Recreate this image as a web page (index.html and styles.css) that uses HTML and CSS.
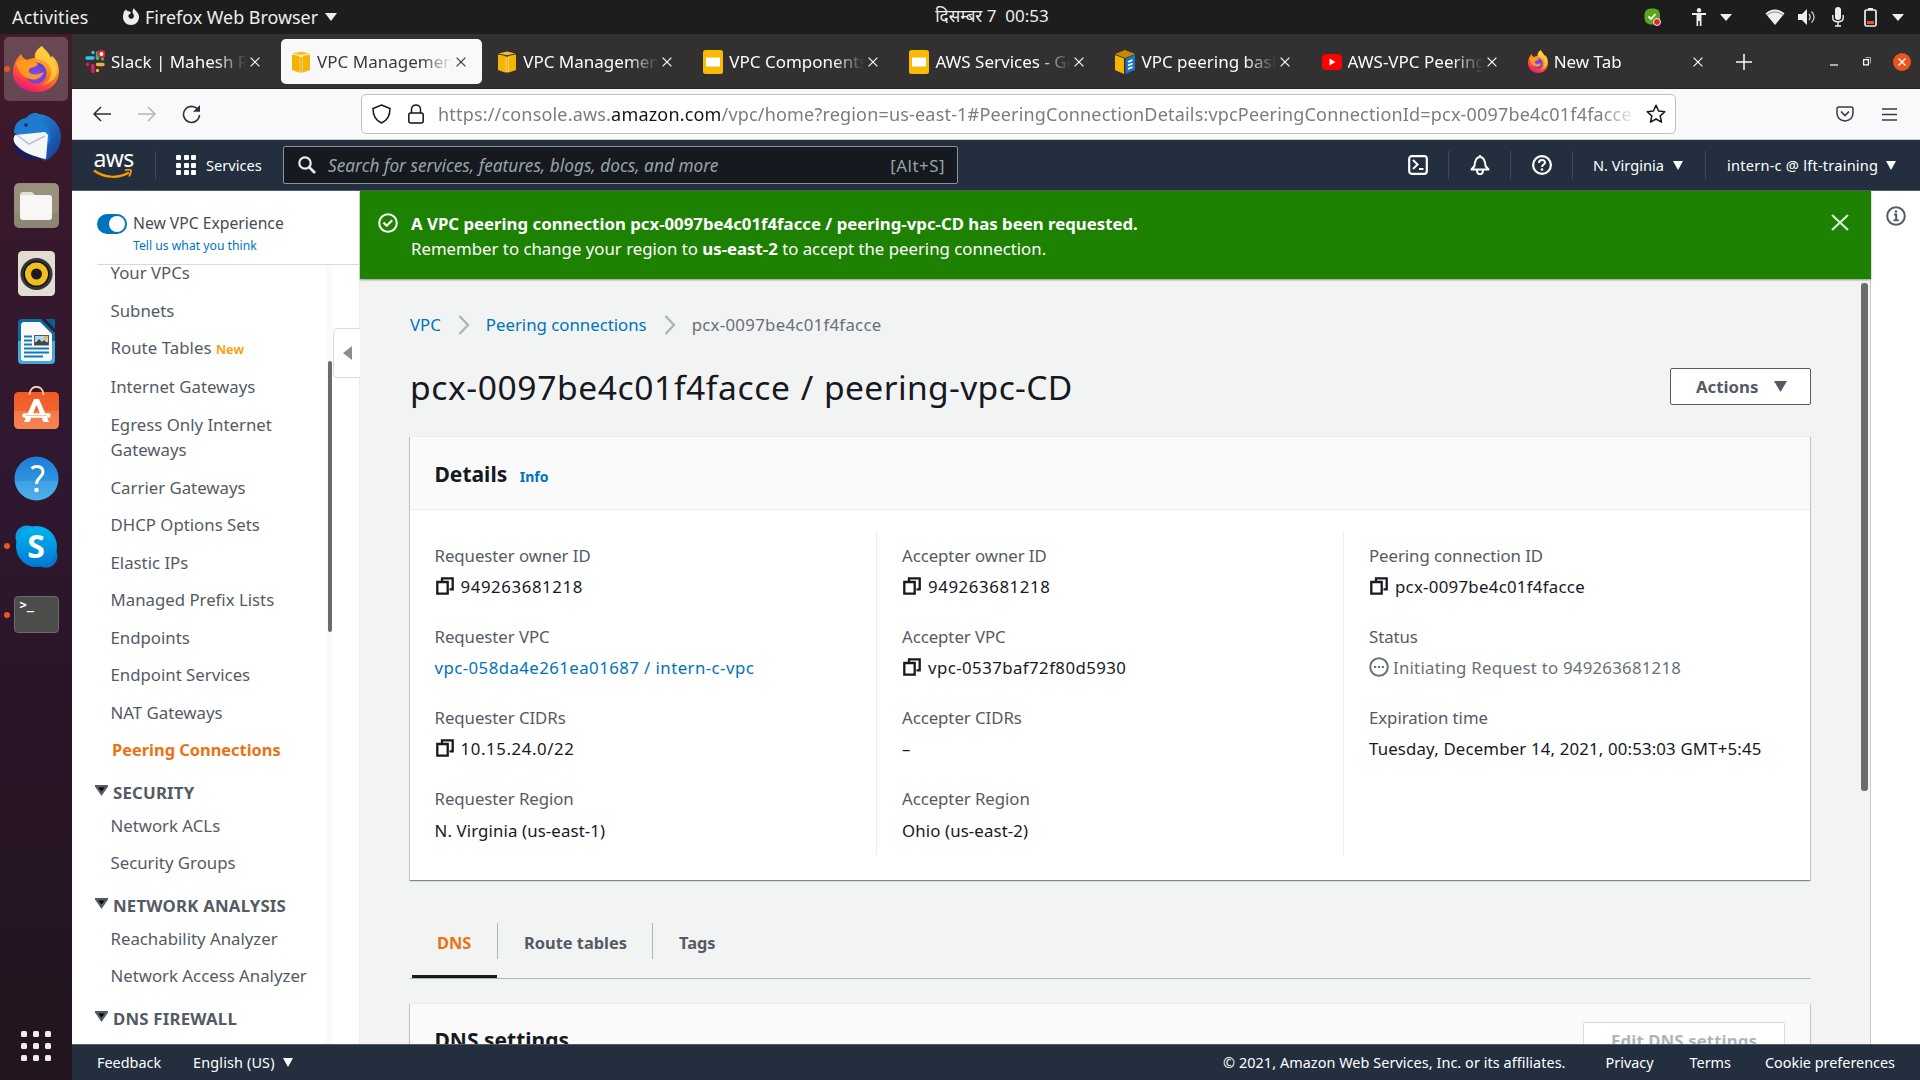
FILE: index.html
```html
<!DOCTYPE html>
<html lang="en">
<head>
<meta charset="utf-8">
<title>VPC Management Console</title>
<link rel="stylesheet" href="styles.css">
</head>
<body>
<svg class="defs" width="0" height="0">
  <defs>
    <linearGradient id="ffBody" x1=".8" y1="0" x2=".3" y2="1"><stop offset="0" stop-color="#ffe14a"/><stop offset=".45" stop-color="#ff8a1f"/><stop offset=".8" stop-color="#ff3b47"/><stop offset="1" stop-color="#e0148a"/></linearGradient>
    <radialGradient id="ffCore" cx=".5" cy=".6" r=".6"><stop offset="0" stop-color="#8a4dff"/><stop offset="1" stop-color="#5b3fc4"/></radialGradient>
    <linearGradient id="tbBody" x1="0" y1="0" x2="1" y2="1"><stop offset="0" stop-color="#1d8fe0"/><stop offset=".6" stop-color="#1b62b5"/><stop offset="1" stop-color="#1a2f86"/></linearGradient>
    <linearGradient id="orange" x1="0" y1="0" x2="0" y2="1"><stop offset="0" stop-color="#f05a22"/><stop offset=".5" stop-color="#f26530"/><stop offset=".5" stop-color="#f47a48"/><stop offset="1" stop-color="#f58350"/></linearGradient>
    <linearGradient id="helpBlue" x1="0" y1="0" x2="0" y2="1"><stop offset="0" stop-color="#1c7cd6"/><stop offset=".55" stop-color="#2f95e0"/><stop offset=".55" stop-color="#3da0e4"/><stop offset="1" stop-color="#4fb0ea"/></linearGradient>
    <linearGradient id="skypeBlue" x1="0" y1="0" x2="0" y2="1"><stop offset="0" stop-color="#00b7f0"/><stop offset="1" stop-color="#0078d4"/></linearGradient>
    <symbol id="firefox" viewBox="0 0 46 46" preserveAspectRatio="none">
      <path fill="url(#ffBody)" d="M29 0c-5 3-8 7-7 12-3 0-6 1-8 2-3-1-5-3-6-6C3 13 0 19 0 26c0 12 10 20 23 20s23-8 23-21c0-7-3-12-7-15l-1 3C37 7 32 4 29 0Z"/>
      <circle cx="23" cy="27" r="10.500" fill="url(#ffCore)"/>
      <path fill="#ff9a1f" d="M3 17c4-3.500 9-4 13-2l9 2.500c0 2.500-4 3.500-7 4.500-4 1.500-2 5 1 6 5 1.500 9-1 12-2-2 5.500-8 9-14 7C9 31 5 25 3 17Z"/>
      <path fill="#ffd23f" d="M29 1c-5 4-8 7-6 12 8 0 14 5 15 11 1 8-4 13-9 15 10-2 16-8 15-17-1-6-3-9-6-12l-1 3C36 8 31 5 29 1Z" opacity=".75"/>
    </symbol>
    <symbol id="cube" viewBox="0 0 18 22"><path fill="#f5b400" d="M0 3.500 7 4.700V21.500L0 19ZM18 3.500 11 4.700V21.500l7-2.500Z"/><path fill="#efae00" d="M7 6h4v15.500H7Z"/><path fill="#fbe3a0" d="M7.600 5h.8v16h-.8ZM9.900 5h.8v16h-.8Z"/><path fill="#f7be1c" d="M9 .4 17.500 2.500 9 4.200.5 2.500Z"/></symbol>
    <symbol id="slides" viewBox="0 0 20 24"><rect width="20" height="24" rx="2.500" fill="#f8bb04"/><rect x="3" y="7.500" width="14" height="9" fill="#fff"/></symbol>
    <symbol id="x" viewBox="0 0 10 10"><path d="M.6.6l8.800 8.800M9.400.6.6 9.400" stroke="currentColor" stroke-width="1.200" fill="none"/></symbol>
    <symbol id="down" viewBox="0 0 12 10" preserveAspectRatio="none"><path fill="currentColor" d="M0 0h12L6 10Z"/></symbol>
    <symbol id="copy" viewBox="0 0 18 18"><path d="M6 4.500V1.300h10.700v11H13.500M1.300 5h10.400v11.700H1.300Z" fill="none" stroke="#16191f" stroke-width="2.300"/></symbol>
    <symbol id="sep" viewBox="0 0 12 20"><path d="m1.500 1 8.500 9-8.500 9" fill="none" stroke="#aab7b8" stroke-width="2.400"/></symbol>
    <symbol id="fold" viewBox="0 0 13 11"><path fill="#545b64" d="M0 0h13v1.500L6.500 11 0 1.500Z"/><path d="M3.500 2.500h6l-3 4Z"/></symbol>
  </defs>
</svg>

<header class="topbar">
  <div class="topbar-left">
    <span class="activities">Activities</span>
    <svg width="16" height="17" viewBox="0 0 16 17"><path fill="#eee" d="M1 3.500 3 1.500l2 2C6 3 7 3.500 8 5L5.500 7C5 10 7 11 8.500 10.800c2.500-.3 3-3 1.500-5.300C9 4 9.500 2 11 0c0 2 5 4 5 9 0 4.500-3.500 8-8 8s-8-3.500-8-8c0-2 .5-3.500 1-5.500Z"/></svg>
    <span class="app-name">Firefox Web Browser</span>
    <svg class="caret" width="12" height="8"><use href="#down"/></svg>
  </div>
  <div class="clock">दिसम्बर 7&nbsp; 00:53</div>
  <div class="topbar-right">
    <svg class="t-skype" width="17" height="18" viewBox="0 0 17 18"><rect x=".5" y=".5" width="15.500" height="16" rx="6" fill="#5aa51c"/><path d="m4.500 8.500 2.500 2.500 4.500-5" stroke="#fff" stroke-width="1.800" fill="none"/><circle cx="13" cy="14" r="3.500" fill="#e0242c" stroke="#eee"/></svg>
    <svg class="t-acc" width="16" height="18" viewBox="0 0 16 18"><circle cx="8" cy="2.300" r="2.200" fill="#eee"/><path fill="#eee" d="M1 5h14v2h-4.500v11H8.800v-5H7.200v5H5.500V7H1Z"/></svg>
    <svg class="t-caret" width="12" height="7"><use href="#down"/></svg>
    <svg class="t-wifi" width="20" height="16" viewBox="0 0 20 16"><path fill="#eee" d="M.5 4.500C6-.8 14-.8 19.500 4.500L10 16Z"/><path d="M2 6c5-4 11-4 16 0" stroke="#888" fill="none"/></svg>
    <svg class="t-vol" width="18" height="16" viewBox="0 0 18 16"><path fill="#eee" d="M0 5h4l5-5v16l-5-5H0Z"/><path d="M11 5c1.500 2 1.500 4 0 6M13.500 2.500c3.500 4 3.500 7.500 0 11" stroke="#ccc" stroke-width="1.300" fill="none"/></svg>
    <svg class="t-mic" width="12" height="20" viewBox="0 0 12 20"><rect x="3" width="6" height="13" rx="3" fill="#eee"/><path d="M.8 8v3c0 5 10.400 5 10.400 0V8M6 15v4M3 19h6" stroke="#eee" stroke-width="1.400" fill="none"/></svg>
    <svg class="t-bat" width="13" height="19" viewBox="0 0 13 19"><path fill="#eee" d="M4 0h5v2H4Z"/><rect x="1" y="2" width="11" height="16" rx="1.500" fill="none" stroke="#eee" stroke-width="1.700"/><path fill="#e95420" d="M3 13h7v3H3Z"/></svg>
    <svg width="12" height="7"><use href="#down"/></svg>
  </div>
</header>

<div class="desktop">
  <nav class="dock">
    <div class="slot active running"><svg width="46" height="46"><use href="#firefox"/></svg></div>
    <div class="slot"><svg width="49" height="48" viewBox="0 0 49 48"><path fill="url(#tbBody)" d="M15 5C21 0 29 0 35 3c9 4 14 12 14 21 0 11-6 19-16 24l-10-6 6-24-12-5Z"/><path fill="#1e7cd0" d="M2 20C2 10 8 6 14 5c3-4 8-6 13-5-4 2-4 6 1 9 8 4 12 11 10 19l-6 8L9 24Z"/><path fill="#1c1a5e" d="M1 30c2 8 6 13 13 16l16 1L8 30Z"/><path fill="#f4f6f8" d="M3 22 33 19l3 3-2 24C23 44 11 40 4 32 1 28 1 25 3 22Z"/><path d="m5 22 12 9 16-8" fill="none" stroke="#b9c2cc" stroke-width="1.500"/><circle cx="14" cy="12" r="1.800" fill="#0d2e6b"/></svg></div>
    <div class="slot"><svg width="45" height="45" viewBox="0 0 45 45"><rect width="45" height="45" rx="5" fill="#8d8672"/><rect x=".5" y=".5" width="44" height="30" rx="5" fill="#a29a84" opacity=".6"/><path fill="#e4dfd3" d="M6 12q0-3 3-3h9l4 4h-4v8H6Z"/><rect x="6" y="12" width="32" height="25" rx="3" fill="#f8f7f5"/></svg></div>
    <div class="slot"><svg width="37" height="45" viewBox="0 0 37 45"><rect width="37" height="45" rx="4.500" fill="#e3ddd1"/><circle cx="18.500" cy="23" r="16" fill="#33343c"/><circle cx="18.500" cy="23" r="13" fill="#111"/><circle cx="18.500" cy="23" r="11.500" fill="#f0be1e"/><circle cx="18.500" cy="23" r="5.500" fill="#1b1b1b"/></svg></div>
    <div class="slot"><svg width="37" height="45" viewBox="0 0 37 45"><path fill="#0d6ca3" d="M4 0h19l14 14v27q0 4-4 4H4q-4 0-4-4V4q0-4 4-4Z"/><path fill="#45a9dc" d="M0 22h37v19q0 4-4 4H4q-4 0-4-4Z"/><path fill="#fafafa" d="M5 3h17l12 12v24q0 3-3 3H6q-3 0-3-3V5Z"/><path fill="#0d5e90" d="M27 0h10v10Z"/><path d="M6 17.500h8M6 21.500h8M6 25.500h8M6 29.500h25M6 33.500h25M6 37.500h19" stroke="#1479b5" stroke-width="2"/><rect x="16" y="16" width="15" height="10.500" fill="#55595e"/><rect x="17" y="17" width="13" height="6" fill="#a9d7ef"/><path fill="#444" d="m17 25 4-5 3 3 2-2 4 4v1H17Z"/><circle cx="28" cy="18.500" r="1.800" fill="#f2b90c"/></svg></div>
    <div class="slot software"><svg width="45" height="43" viewBox="0 0 45 43"><rect y="6" width="45" height="37" rx="4.500" fill="url(#orange)"/><path d="M15.500 9c0-11 14-11 14 0" fill="none" stroke="#f6d3a8" stroke-width="1.800"/><path fill="#fff" d="M20 13h5l10 23h-5.500l-7-17-7 17H10Z"/><path d="M10.500 29.500h24" stroke="#fff" stroke-width="4.500" stroke-linecap="round"/><path d="M12 29.500h21" stroke="#f9c3a8" stroke-width="1"/></svg></div>
    <div class="slot"><svg width="45" height="45" viewBox="0 0 45 45"><circle cx="22.500" cy="22.500" r="22" fill="url(#helpBlue)"/><path d="M17.500 12.500c4-3.200 11.500-2.500 11.500 3.500 0 5-6.500 5.500-6.500 12" fill="none" stroke="#fff" stroke-width="3"/><circle cx="22.500" cy="34" r="2.300" fill="#fff"/></svg></div>
    <div class="slot running"><svg width="43" height="43" viewBox="0 0 43 43"><circle cx="12" cy="12" r="11.500" fill="#0e9fdc"/><circle cx="31" cy="31" r="11.500" fill="#0a74cc"/><circle cx="21.500" cy="21.500" r="20.500" fill="url(#skypeBlue)"/></svg><b class="skype-s">S</b></div>
    <div class="slot running"><div class="terminal">&gt;_</div></div>
    <div class="apps"><i></i><i></i><i></i><i></i><i></i><i></i><i></i><i></i><i></i></div>
  </nav>

  <div class="window">
    <div class="tabs">
      <div class="tab"><svg width="20" height="24" viewBox="0 0 20 24"><g stroke-linecap="round" stroke-width="3.400"><path d="M8 2.500v.1M2 8h6" stroke="#36c5f0"/><path d="M12.500 3v5.500" stroke="#2eb67d"/><path d="M17.500 9h.1" stroke="#2eb67d"/><path d="M7.800 15.500v6M2.500 14.500h.1" stroke="#e01e5a"/><path d="M12.500 14.500h5.500M12.500 20.500v.1" stroke="#ecb22e"/></g><circle cx="16.500" cy="4" r="3" fill="#fff" stroke="#e0242c" stroke-width="2.200"/></svg><span class="label">Slack | Mahesh R</span><svg class="close" width="10" height="10"><use href="#x"/></svg></div>
      <div class="tab current"><svg class="cube" width="18" height="22"><use href="#cube"/></svg><span class="label">VPC Management</span><svg class="close" width="10" height="10"><use href="#x"/></svg></div>
      <div class="tab"><svg class="cube" width="18" height="22"><use href="#cube"/></svg><span class="label">VPC Management</span><svg class="close" width="10" height="10"><use href="#x"/></svg></div>
      <div class="tab"><svg width="20" height="24"><use href="#slides"/></svg><span class="label">VPC Components</span><svg class="close" width="10" height="10"><use href="#x"/></svg></div>
      <div class="tab"><svg width="20" height="24"><use href="#slides"/></svg><span class="label">AWS Services - Go</span><svg class="close" width="10" height="10"><use href="#x"/></svg></div>
      <div class="tab"><svg width="20" height="24" viewBox="0 0 20 24"><path fill="#c98a00" d="M10 0 20 4 10 8 0 4Z"/><path fill="#f5b400" d="m0 5 9 3.500V24l-9-4Z"/><path fill="#1a74c4" d="m10.500 8.500 9.500-4V20l-9.500 4Z"/><path d="m13 12 4.500-2M13 15.500l4.500-2M13 19l4.500-2" stroke="#fff" stroke-width="1.800"/></svg><span class="label">VPC peering basics</span><svg class="close" width="10" height="10"><use href="#x"/></svg></div>
      <div class="tab"><svg width="20" height="18" viewBox="0 0 20 18"><rect y="1" width="20" height="16" rx="4" fill="#f00"/><path fill="#fff" d="M7.500 5.500v7l6-3.500Z"/></svg><span class="label">AWS-VPC Peering</span><svg class="close" width="10" height="10"><use href="#x"/></svg></div>
      <div class="tab"><svg width="20" height="23"><use href="#firefox"/></svg><span class="label">New Tab</span><svg class="close" width="10" height="10"><use href="#x"/></svg></div>
      <svg class="newtab" width="16" height="16" viewBox="0 0 16 16"><path d="M8 0v16M0 8h16" stroke="#fbfbfb" stroke-width="1.500"/></svg>
      <div class="winctl">
        <svg width="8" height="12" viewBox="0 0 8 12"><path d="M0 9h8" stroke="#fff" stroke-width="1.200"/></svg>
        <svg width="8" height="9" viewBox="0 0 8 9"><path d="M.6 2.600h4.800v5.200H.6Z" fill="none" stroke="#fff" stroke-width="1.200"/><path d="M2.500.5h5v6" fill="none" stroke="#aaa"/></svg>
        <svg width="18" height="18" viewBox="0 0 18 18"><circle cx="9" cy="9" r="9" fill="#e95420"/><path d="m5.500 5.500 7 7m0-7-7 7" stroke="#fff" stroke-width="1.300"/></svg>
      </div>
    </div>

    <div class="toolbar">
      <svg width="18" height="16" viewBox="0 0 18 16"><path d="M18 8H1.500M8 1 1 8l7 7" fill="none" stroke="#2d2d33" stroke-width="1.500"/></svg>
      <svg class="fwd" width="18" height="16" viewBox="0 0 18 16"><path d="M0 8h16.500M10 1l7 7-7 7" fill="none" stroke="#b5b5b8" stroke-width="1.500"/></svg>
      <svg class="rel" width="19" height="19" viewBox="0 0 19 19"><path d="M16.500 5.500A8 8 0 1 0 17.500 10" fill="none" stroke="#2d2d33" stroke-width="1.600"/><path fill="#2d2d33" d="M18 0v6.800h-7Z"/></svg>
      <div class="urlbar">
        <svg width="19" height="20" viewBox="0 0 19 20"><path d="M9.500 1 18 4.500C18 12 15.500 16.500 9.500 19 3.500 16.500 1 12 1 4.500Z" fill="none" stroke="#15141a" stroke-width="1.500"/></svg>
        <svg class="lock" width="16" height="20" viewBox="0 0 16 20"><rect x=".8" y="9" width="14.400" height="10" rx="2" fill="none" stroke="#15141a" stroke-width="1.500"/><path d="M3.500 9V5.500c0-6 9-6 9 0V9" fill="none" stroke="#15141a" stroke-width="1.500"/></svg>
        <span class="url">https://console.aws.<b>amazon.com</b>/vpc/home?region=us-east-1#PeeringConnectionDetails:vpcPeeringConnectionId=pcx-0097be4c01f4facce</span>
        <svg width="20" height="20" viewBox="0 0 20 20"><path d="m10 1.200 2.600 5.800 6.200.7-4.600 4.200 1.300 6.300-5.500-3.200-5.500 3.200 1.300-6.300L1.200 7.700 7.400 7Z" fill="none" stroke="#15141a" stroke-width="1.500" stroke-linejoin="round"/></svg>
      </div>
      <svg class="pocket" width="18" height="16" viewBox="0 0 18 16"><path d="M1 3q0-2 2-2h12q2 0 2 2v4q0 7-8 8-8-1-8-8Z" fill="none" stroke="#3a3a40" stroke-width="1.500"/><path d="m5 5.500 4 4 4-4" fill="none" stroke="#3a3a40" stroke-width="1.600"/></svg>
      <svg class="menu" width="15" height="13" viewBox="0 0 15 13"><path d="M0 1h15M0 6.500h15M0 12h15" stroke="#3a3a40" stroke-width="1.400"/></svg>
    </div>

    <div class="awsbar">
      <div class="aws-logo"><span>aws</span><svg width="40" height="10" viewBox="0 0 40 10"><path d="M1 1.500C12 9.500 26 9.500 36 3.500" fill="none" stroke="#f90" stroke-width="2.200"/><path d="M32 1.200c4-.8 6.500-.7 6 1C38 4 37 6 36 7.500" fill="none" stroke="#f90" stroke-width="1.700"/></svg></div>
      <i class="vr"></i>
      <div class="grid9"><i></i><i></i><i></i><i></i><i></i><i></i><i></i><i></i><i></i></div>
      <span class="services">Services</span>
      <div class="search">
        <svg width="18" height="18" viewBox="0 0 18 18"><circle cx="7" cy="7" r="5.700" fill="none" stroke="#eaeded" stroke-width="2.200"/><path d="m11 11 6 6" stroke="#eaeded" stroke-width="2.600"/></svg>
        <em>Search for services, features, blogs, docs, and more</em>
        <span class="kbd">[Alt+S]</span>
      </div>
      <div class="aws-right">
        <svg width="20" height="20" viewBox="0 0 20 20"><rect x="1.200" y="1.200" width="17.600" height="17.600" rx="2.500" fill="none" stroke="#fff" stroke-width="2.200"/><path d="m5 5 4.500 4.500L5 14M11 14h4.500" fill="none" stroke="#fff" stroke-width="2"/></svg>
        <i class="vr"></i>
        <svg width="20" height="20" viewBox="0 0 20 20"><path d="M1.500 14.500 4.500 11C5 5 6.500 2 10 2s5 3 5.500 9l3 3.500Z" fill="none" stroke="#fff" stroke-width="2" stroke-linejoin="round"/><path d="M10 0v3M7 15c0 5.500 6 5.500 6 0" fill="none" stroke="#fff" stroke-width="2"/></svg>
        <i class="vr"></i>
        <svg width="20" height="20" viewBox="0 0 20 20"><circle cx="10" cy="10" r="8.900" fill="none" stroke="#fff" stroke-width="2.200"/><path d="M7 8c0-4 6-3.800 6-.5C13 9.500 10 9.500 10 12" fill="none" stroke="#fff" stroke-width="2"/><circle cx="10" cy="14.500" r="1.300" fill="#fff"/></svg>
        <i class="vr"></i>
        <span class="region">N. Virginia</span><svg class="dd" width="10" height="9"><use href="#down"/></svg>
        <i class="vr last"></i>
        <span class="account">intern-c @ lft-training</span><svg class="dd" width="10" height="9"><use href="#down"/></svg>
      </div>
    </div>

    <div class="page">
      <aside class="sidebar">
        <div class="exp">
          <i class="toggle"></i>
          <div class="exp-text"><span>New VPC Experience</span><a>Tell us what you think</a></div>
        </div>
        <div class="nav">
          <ul>
            <li>Your VPCs</li><li>Subnets</li><li class="tall">Route Tables <b>New</b></li><li>Internet Gateways</li><li>Egress Only Internet<br>Gateways</li><li>Carrier Gateways</li><li>DHCP Options Sets</li><li>Elastic IPs</li><li>Managed Prefix Lists</li><li>Endpoints</li><li>Endpoint Services</li><li>NAT Gateways</li><li class="sel">Peering Connections</li>
          </ul>
          <h3><svg width="13" height="11"><use href="#fold"/></svg>SECURITY</h3>
          <ul><li>Network ACLs</li><li>Security Groups</li></ul>
          <h3><svg width="13" height="11"><use href="#fold"/></svg>NETWORK ANALYSIS</h3>
          <ul><li>Reachability Analyzer</li><li>Network Access Analyzer</li></ul>
          <h3><svg width="13" height="11"><use href="#fold"/></svg>DNS FIREWALL</h3>
        </div>
        <i class="side-thumb"></i>
        <div class="collapse"><svg width="9" height="14" viewBox="0 0 9 14"><path fill="#8d8d8d" d="M9 0v14L0 7Z"/></svg></div>
      </aside>

      <main class="main">
        <div class="flash">
          <svg width="20" height="20" viewBox="0 0 20 20"><circle cx="10" cy="10" r="8.800" fill="none" stroke="#fff" stroke-width="2"/><path d="m5.500 9.500 3.200 3.300 5.500-5.600" fill="none" stroke="#fff" stroke-width="2.200"/></svg>
          <div class="flash-text"><p class="strong">A VPC peering connection pcx-0097be4c01f4facce / peering-vpc-CD has been requested.</p><p>Remember to change your region to <b>us-east-2</b> to accept the peering connection.</p></div>
          <svg class="flash-x" width="18" height="17" viewBox="0 0 18 17"><path d="m1 1 16 15M17 1 1 16" stroke="#dfeadf" stroke-width="2.200"/></svg>
        </div>
        <div class="content">
          <div class="crumbs"><a>VPC</a><svg width="12" height="20"><use href="#sep"/></svg><a>Peering connections</a><svg width="12" height="20"><use href="#sep"/></svg><span class="ids">pcx-0097be4c01f4facce</span></div>
          <div class="title-row"><h1><span>pcx-0097be4c01f4facce</span> / peering-vpc-CD</h1><button class="btn">Actions<svg width="13" height="11"><use href="#down"/></svg></button></div>
          <section class="card details">
            <header><h2>Details</h2><a>Info</a></header>
            <div class="cols">
              <dl>
                <dt>Requester owner ID</dt><dd><svg width="18" height="18"><use href="#copy"/></svg><span class="num">949263681218</span></dd>
                <dt>Requester VPC</dt><dd class="mix link">vpc-058da4e261ea01687 / intern-c-vpc</dd>
                <dt>Requester CIDRs</dt><dd><svg width="18" height="18"><use href="#copy"/></svg><span class="num">10.15.24.0/22</span></dd>
                <dt>Requester Region</dt><dd class="reg">N. Virginia (us-east-1)</dd>
              </dl>
              <dl>
                <dt>Accepter owner ID</dt><dd><svg width="18" height="18"><use href="#copy"/></svg><span class="num">949263681218</span></dd>
                <dt>Accepter VPC</dt><dd><svg width="18" height="18"><use href="#copy"/></svg><span class="mix">vpc-0537baf72f80d5930</span></dd>
                <dt>Accepter CIDRs</dt><dd>–</dd>
                <dt>Accepter Region</dt><dd class="reg">Ohio (us-east-2)</dd>
              </dl>
              <dl>
                <dt>Peering connection ID</dt><dd><svg width="18" height="18"><use href="#copy"/></svg><span class="ids">pcx-0097be4c01f4facce</span></dd>
                <dt>Status</dt><dd class="pending"><svg width="20" height="20" viewBox="0 0 20 20"><circle cx="10" cy="10" r="8.800" fill="none" stroke="#687078" stroke-width="2"/><path d="M5 10h2.200M8.900 10h2.200M12.800 10H15" stroke="#687078" stroke-width="2.200"/></svg><span>Initiating Request to 949263681218</span></dd>
                <dt>Expiration time</dt><dd class="date">Tuesday, December 14, 2021, 00:53:03 GMT+5:45</dd>
              </dl>
            </div>
          </section>
          <div class="subtabs"><span class="on">DNS</span><span>Route tables</span><span>Tags</span></div>
          <section class="card"><header class="dns"><h2>DNS settings</h2><button class="btn disabled">Edit DNS settings</button></header></section>
        </div>
        <i class="main-thumb"></i>
      </main>
      <div class="help"><svg width="20" height="20" viewBox="0 0 20 20"><circle cx="10" cy="10" r="8.800" fill="none" stroke="#545b64" stroke-width="2"/><path d="M8 8.500h2.200V14M7.500 14.200h5.200" fill="none" stroke="#545b64" stroke-width="2"/><circle cx="10" cy="5.500" r="1.300" fill="#545b64"/></svg></div>
    </div>

    <footer class="foot">
      <span class="fb">Feedback</span><span class="lang">English (US)</span><svg class="dd" width="10" height="9"><use href="#down"/></svg>
      <span class="copyr">© 2021, Amazon Web Services, Inc. or its affiliates.</span><span class="privacy">Privacy</span><span class="terms">Terms</span><span>Cookie preferences</span>
    </footer>
  </div>
</div>
</body>
</html>
```
FILE: styles.css
```css
* { box-sizing: border-box; }
body { margin: 0; width: 1920px; height: 1080px; overflow: hidden; font-family: "Noto Sans", "Open Sans", sans-serif; font-size: 16.8px; line-height: 25.2px; color: #16191f; background: #fff; }
svg { flex: none; display: block; }
.defs { position: absolute; }
h1, h2, h3, p, ul, dl, dt, dd { margin: 0; padding: 0; list-style: none; font-weight: 400; }
button { font: inherit; margin: 0; }

/* desktop panel */
.topbar { height: 34px; background: #1d1d1d; color: #eee; display: grid; grid-template-columns: 1fr auto 1fr; align-items: center; font-size: 17.9px; }
.topbar-left { display: flex; align-items: center; padding-left: 12px; }
.topbar-left span { padding-top: 1px; }
.activities { width: 111px; letter-spacing: .2px; }
.app-name { margin-left: 6px; white-space: nowrap; }
.caret { margin-left: 7px; }
.clock { font-size: 17px; line-height: 30px; padding: 0 0 3px 64px; white-space: nowrap; }
.topbar-right { display: flex; align-items: center; justify-content: flex-end; padding-right: 16px; }
.t-skype { margin-right: 30px; }
.t-acc { margin-right: 13px; }
.t-caret { margin-right: 33px; }
.t-wifi { margin-right: 13px; }
.t-vol { margin-right: 16px; }
.t-mic { margin-right: 20px; }
.t-bat { margin-right: 15px; }

.desktop { display: flex; height: 1046px; }
.dock { width: 72px; flex: none; padding-top: 1px; display: flex; flex-direction: column; align-items: center; background: linear-gradient(#451c27 0, #39182b 12%, #301830 40%, #291529 62%, #23151f 100%); }
.slot { width: 64px; height: 64px; margin: 2px 0 2.2px; flex: none; display: flex; align-items: center; justify-content: center; border-radius: 5px; position: relative; }
.slot.active { background: rgba(255,255,255,.2); }
.slot.running::before { content: ""; position: absolute; left: 0; top: 29px; width: 6px; height: 6px; border-radius: 50%; background: #e95420; }
.slot.software { padding-bottom: 4px; }
.skype-s { position: absolute; left: 0; width: 64px; text-align: center; top: 14px; font: 700 32px/36px "Noto Sans", sans-serif; color: #fff; }
.terminal { width: 45px; height: 37px; border-radius: 4px; background: #4c4c4b; border: 1px solid #6a6a69; color: #fff; font: 700 12px/13px "DejaVu Sans Mono", monospace; padding: 2px 5px; }
.apps { margin-top: auto; margin-bottom: 19px; display: grid; grid-template-columns: repeat(3, 6px); gap: 6px; }
.apps i { width: 6px; height: 6px; border-radius: 1.5px; background: #eee; }

/* browser chrome */
.window { flex: 1; min-width: 0; display: flex; flex-direction: column; }
.tabs { height: 55px; background: #333031; border-bottom: 1px solid #242424; display: flex; align-items: center; padding: 1px 0 0 3px; color: #fbfbfe; flex: none; }
.tab { width: 201px; height: 45px; margin-right: 5.1px; border-radius: 5px; display: flex; align-items: center; padding-left: 10px; flex: none; }
.tab > svg:first-child { margin-right: 6px; }
.tab > svg.cube { margin: 0 7px 0 1px; }
.label { width: 137px; padding-top: 1px; overflow: hidden; white-space: nowrap; font-size: 17px; -webkit-mask-image: linear-gradient(90deg, #000 76%, transparent 99%); mask-image: linear-gradient(90deg, #000 76%, transparent 99%); }
.tab.current { background: #f9f9fb; color: #3a3a3e; }
.close { margin-left: 2px; }
.newtab { margin-left: 12px; }
.winctl { display: flex; align-items: center; margin-left: auto; padding-right: 9px; gap: 25px; }
.winctl svg:nth-child(3) { margin-left: -3px; }

.toolbar { height: 51px; background: #f9f9fb; border-bottom: 1px solid #ccc; display: flex; align-items: center; padding-left: 21px; flex: none; }
.fwd { margin-left: 27px; }
.rel { margin-left: 26px; }
.urlbar { margin-left: 160px; width: 1315px; height: 40px; background: #fff; border: 1px solid #c0c0c4; border-radius: 5px; display: flex; align-items: center; padding-left: 10px; flex: none; }
.lock { margin-left: 17px; }
.url { margin: 0 9px 0 14px; padding-top: 1px; width: 1199px; overflow: hidden; white-space: nowrap; font-size: 18px; letter-spacing: .18px; color: #7c7c80; -webkit-mask-image: linear-gradient(90deg, #000 97%, transparent); mask-image: linear-gradient(90deg, #000 97%, transparent); }
.url b { font-weight: 400; color: #15141a; }
.pocket { margin-left: 160px; }
.menu { margin-left: 28px; }

/* console header */
.awsbar { height: 51px; background: #232f3e; border-bottom: 1px solid #545b64; color: #fff; display: flex; align-items: center; font-size: 14.6px; padding-left: 21px; flex: none; }
.aws-logo { width: 41px; height: 29px; font-size: 23px; line-height: 15px; text-align: center; }
.aws-logo span { display: block; letter-spacing: -.6px; }
.aws-logo svg { margin-top: 3px; }
.vr { width: 1px; height: 28px; background: #414d5c; flex: none; }
.aws-logo + .vr { margin-left: 21px; }
.grid9 { margin: 0 10px 0 20px; display: grid; grid-template-columns: repeat(3, 5px); gap: 2.5px; }
.grid9 i { width: 5px; height: 5px; background: #fff; border-radius: 1px; }
.services { width: 56px; padding-top: 2px; }
.search { margin-left: 21px; width: 675px; height: 38px; border: 1px solid #879596; border-radius: 2px; background: #16191f; display: flex; align-items: center; padding: 0 12px 0 14px; color: #95a5a6; }
.search em { margin-left: 12px; font-size: 17.25px; padding-top: 2px; }
.kbd { margin-left: auto; padding-top: 1px; font-size: 16.8px; letter-spacing: .55px; }
.aws-right { margin-left: auto; display: flex; align-items: center; padding-right: 24px; }
.aws-right .vr { margin: 0 20.5px; }
.aws-right .vr:nth-child(6) { margin-right: 20px; }
.region { width: 80px; padding-top: 2px; }
.account { letter-spacing: .22px; width: 159px; padding-top: 2px; }
.aws-right .vr.last { margin: 0 21px 0 22px; }

.page { height: 853px; display: flex; flex: none; overflow: hidden; }
.sidebar { width: 288px; flex: none; position: relative; display: flex; flex-direction: column; color: #545b64; border-right: 1px solid #eaeded; }
.exp { height: 74px; margin-left: 25px; border-bottom: 1px solid #d5dbdb; display: flex; padding-top: 20px; flex: none; }
.toggle { width: 30px; height: 20px; border-radius: 10px; background: #0073bb; margin-top: 3px; display: flex; justify-content: flex-end; align-items: center; padding-right: 2px; }
.toggle::after { content: ""; width: 16px; height: 16px; border-radius: 50%; background: #fff; }
.exp-text { margin-left: 6px; display: flex; flex-direction: column; font-size: 15.7px; line-height: 25px; color: #444c55; }
.exp-text a { font-size: 12.2px; line-height: 20px; color: #0073bb; }
.nav { flex: 1; overflow: hidden; width: 260px; border-right: 7px solid #fafafa; padding-left: 24px; margin-top: -5px; clip-path: inset(5px 0 0 0); }
.nav li { padding-left: 14.5px; margin-bottom: 12.3px; white-space: nowrap; }
.nav li.tall { height: 25.2px; margin-bottom: 14.3px; letter-spacing: .05px; }
.nav li b { font-size: 12.8px; font-weight: 600; color: #f90; }
.nav li.sel { color: #ec7211; font-weight: 700; font-size: 16.4px; padding-left: 16px; }
.nav h3 { font-weight: 700; font-size: 16.8px; letter-spacing: .2px; line-height: 25px; display: flex; align-items: center; margin: 17.3px 0 8px -1px; }
.nav h3 svg { margin: 0 5px 4px 0; }
.side-thumb { position: absolute; left: 256px; top: 170px; width: 4px; height: 271px; border-radius: 2px; background: #6b6b6b; }
.collapse { position: absolute; left: 261px; top: 137px; width: 27px; height: 50px; border: 1px solid #d5dbdb; border-right: 0; border-radius: 5px 0 0 5px; background: #fff; display: flex; align-items: center; padding-left: 9px; }

.main { width: 1511px; flex: none; background: #f2f3f3; position: relative; border-right: 1px solid #c5cbcb; }
.flash { height: 88px; margin-right: -1px; background: #1d8102; color: #fff; display: flex; padding: 22px 22px 0 18px; box-shadow: 0 1px 2px rgba(0,0,0,.4); position: relative; }
.flash-text { margin: -2px 0 0 13px; white-space: nowrap; }
.flash .strong { font-weight: 700; }
.flash-x { margin: 1px 0 0 auto; }
.content { padding: 33px 59px 0 50px; }
.crumbs { display: flex; align-items: center; color: #687078; height: 26px; }
.crumbs svg { margin: 0 16px 0 17px; }
.crumbs a, .card header a, .link { color: #0073bb; }
.ids { letter-spacing: .29px; }
.num { letter-spacing: .6px; }
.mix { letter-spacing: .44px; }
.date { letter-spacing: .17px; }
.title-row { display: flex; justify-content: space-between; align-items: flex-start; margin-top: 25px; height: 73px; padding-top: 5px; }
h1 { font-size: 33.6px; line-height: 42px; letter-spacing: .36px; word-spacing: 1.3px; margin-top: -2px; }
h1 span { letter-spacing: .6px; }
.btn { height: 37px; width: 141px; border: 1px solid #545b64; border-radius: 2px; background: #fff; color: #545b64; font-weight: 700; display: flex; align-items: center; padding: 0 0 0 25px; }
.btn svg { margin-left: 16px; }
.card { background: #fff; width: 1400px; border-top: 1px solid #eaeded; box-shadow: 0 1px 1px 0 rgba(0,28,36,.3), 1px 1px 1px 0 rgba(0,28,36,.15), -1px 1px 1px 0 rgba(0,28,36,.15); }
.card header { height: 73px; background: #fafafa; border-bottom: 1px solid #eaeded; display: flex; align-items: baseline; padding: 22px 25px 0 24.5px; }
h2 { font-size: 21px; line-height: 30px; font-weight: 700; }
.card header a { margin-left: 12.5px; font-size: 14px; font-weight: 700; }
.details { height: 444px; }
.cols { display: flex; padding: 21px 0 0 24.5px; }
.cols dl { width: 441.5px; height: 324px; padding-top: 12px; }
.cols dl + dl { width: 467px; border-left: 1px solid #eaeded; padding-left: 25px; }
dt { color: #545b64; line-height: 25px; letter-spacing: -.05px; }
dd { line-height: 25px; height: 25px; margin: 6px 0 25px; display: flex; align-items: center; white-space: nowrap; }
dd svg { margin: 0 7px 2px 1px; }
.reg { letter-spacing: .13px; padding-top: 1px; }
.pending { color: #687078; }
.pending svg { margin: 0 4px 2px 0; }
.pending span { letter-spacing: .24px; }
.subtabs { margin-top: 32px; height: 67px; padding: 11px 0 0 2px; display: flex; border-bottom: 1px solid #aab7b8; font-weight: 700; font-size: 16.4px; color: #545b64; }
.subtabs span { padding: 7px 25px 0 26px; height: 36px; border-left: 1px solid #aab7b8; }
.subtabs .on { color: #ec7211; border-left: 0; height: 55px; border-bottom: 3px solid #16191f; width: 85px; padding-left: 25px; }
.subtabs + .card { margin-top: 24px; }
.card header.dns { justify-content: space-between; align-items: flex-start; padding-top: 18px; }
.dns h2 { margin-top: 3px; }
.btn.disabled { width: 202px; color: #aab7b8; border-color: #d5dbdb; justify-content: center; padding: 0; letter-spacing: .1px; }
.main-thumb { position: absolute; left: 1501px; top: 92px; width: 7px; height: 508px; border-radius: 3px; background: #6b6b6b; }
.help { flex: 1; background: #fff; padding: 15px 0 0 15px; }

.foot { height: 36px; background: #232f3e; border-top: 1px solid #545b64; color: #fff; display: flex; align-items: center; padding: 0 25px; font-size: 14.4px; white-space: nowrap; flex: none; }
.lang { margin: 0 8px 0 32px; letter-spacing: .15px; }
.copyr { margin-left: auto; letter-spacing: .07px; }
.privacy { margin: 0 36px 0 40px; }
.terms { margin-right: 34px; }
```
